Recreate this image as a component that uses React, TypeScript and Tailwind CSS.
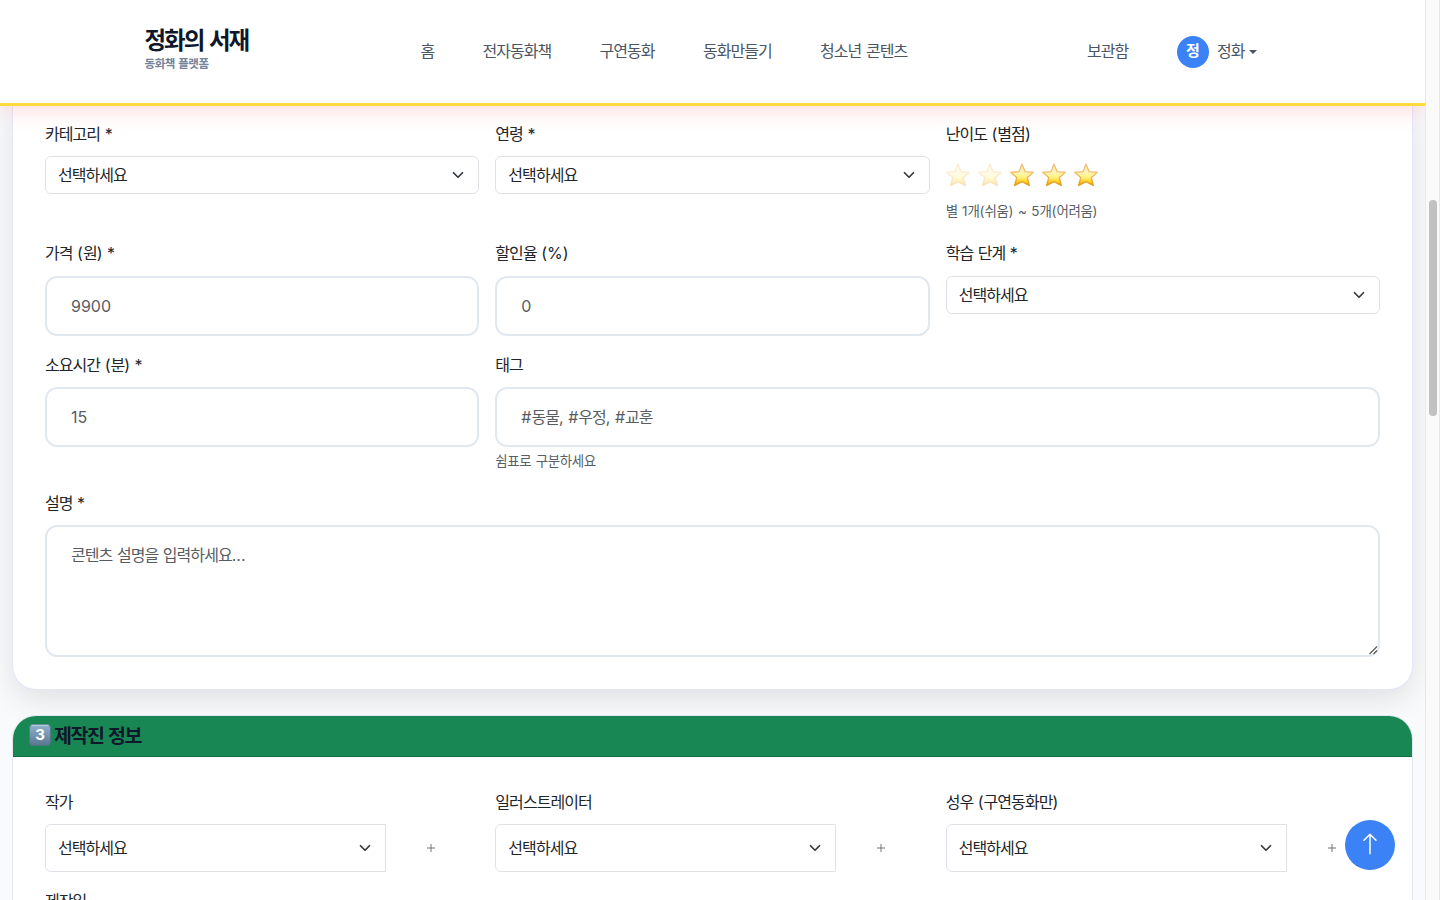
import React from "react";

const chevron = (
  <svg width="16" height="12" viewBox="0 0 16 16" className="shrink-0">
    <path fill="none" stroke="#343a40" strokeLinecap="round" strokeLinejoin="round" strokeWidth="2.3" d="m2 5 6 6 6-6" />
  </svg>
);

function Label({ children }: { children: React.ReactNode }) {
  return <div className="mb-2 h-[26px] whitespace-nowrap text-[16px] leading-[25px] text-[#212529]">{children}</div>;
}

// Hangul run set tighter than the surrounding Latin text
function K({ children }: { children: React.ReactNode }) {
  return <span className="tracking-[-0.94px] [word-spacing:1px]">{children}</span>;
}

// Hangul run inside the small help texts
function S({ children }: { children: React.ReactNode }) {
  return <span className="tracking-[-0.4px] [word-spacing:1px]">{children}</span>;
}

function Select({ joined }: { joined?: boolean }) {
  return (
    <div
      className={
        joined
          ? "flex h-12 w-[341px] items-center justify-between rounded-l-[6px] border border-[#dee2e6] bg-white pr-3 pl-3 text-[16px] leading-6 text-[#212529]"
          : "flex h-[38px] items-center justify-between rounded-[6px] border border-[#dee2e6] bg-white pr-3 pl-3 text-[16px] leading-6 text-[#212529]"
      }
    >
      <K>선택하세요</K>
      {chevron}
    </div>
  );
}

function Input({ children }: { children: React.ReactNode }) {
  return (
    <div className="flex h-[60px] items-center rounded-xl border-2 border-[#e2e8f0] bg-white px-6 text-[16px] leading-6 text-[#595c5f]">
      {children}
    </div>
  );
}

function Star({ faded }: { faded?: boolean }) {
  return (
    <svg width="24" height="24" viewBox="0 0 24 24" className={faded ? "opacity-30" : ""}>
      <defs>
        <linearGradient id="starFill" x1="0" y1="0" x2="0" y2="1">
          <stop offset="0" stopColor="#ffe59a" />
          <stop offset="0.4" stopColor="#fff6b8" />
          <stop offset="0.62" stopColor="#fff280" />
          <stop offset="0.8" stopColor="#ffd52c" />
          <stop offset="1" stopColor="#f0a000" />
        </linearGradient>
        <linearGradient id="starEdge" x1="0" y1="0" x2="0" y2="1">
          <stop offset="0" stopColor="#f2bf85" />
          <stop offset="0.5" stopColor="#f5ba5c" />
          <stop offset="1" stopColor="#e8940c" />
        </linearGradient>
      </defs>
      <path
        d="M12 1.1 15.1 8.7 23.4 9.3 17.3 14.6 19.3 22.4 12 18.6 4.7 22.4 6.7 14.6 .6 9.3 8.9 8.7Z"
        fill="url(#starFill)"
        stroke="url(#starEdge)"
        strokeWidth="1.3"
        strokeLinejoin="round"
      />
    </svg>
  );
}

function Person({ label }: { label: React.ReactNode }) {
  return (
    <div>
      <Label>{label}</Label>
      <div className="flex">
        <Select joined />
        <div className="flex h-12 flex-1 items-center justify-center">
          <svg width="8" height="8" viewBox="0 0 8 8" className="mr-[3px]">
            <path d="M4 0v8M0 4h8" stroke="#6c757d" strokeWidth="1" />
          </svg>
        </div>
      </div>
    </div>
  );
}

export default function App() {
  return (
    <div className="flex h-[900px] w-[1440px] overflow-hidden bg-[#f8fafc] font-[Inter,'Noto_Sans_CJK_KR',sans-serif]">
      <div className="flex w-[1425px] shrink-0 flex-col">
        <header className="relative z-10 flex h-[106px] shrink-0 items-center border-b-[3px] border-[#ffd93d] bg-white text-[16px] font-normal whitespace-nowrap text-[#4b5563] shadow-[0_4px_20px_rgba(255,107,107,0.25)]">
          <div className="ml-[144.5px] w-[276px] pb-[5px]">
            <div className="h-[29px] text-[23.5px] leading-[28px] font-bold tracking-[-2px] text-[#0f172a] [word-spacing:2px]">정화의 서재</div>
            <div className="h-[16px] text-[11.5px] leading-4 font-bold tracking-[-0.45px] text-[#74829a] [word-spacing:1px]">동화책 플랫폼</div>
          </div>
          <nav className="flex w-[666.5px] pb-[2px] leading-6">
            <span className="w-[62px]"><K>홈</K></span>
            <span className="w-[117px]"><K>전자동화책</K></span>
            <span className="w-[103.5px]"><K>구연동화</K></span>
            <span className="w-[117px]"><K>동화만들기</K></span>
            <span><K>청소년 콘텐츠</K></span>
          </nav>
          <span className="w-[90px] pb-[2px]"><K>보관함</K></span>
          <div className="flex h-8 w-8 items-center justify-center rounded-full bg-[#3b82f6] text-[15px] font-bold text-white">정</div>
          <span className="ml-2 pb-[2px]"><K>정화</K></span>
          <svg width="8" height="4" viewBox="0 0 8 4" className="ml-[4px]">
            <path d="M0 0h8L4 4Z" fill="#4b5563" />
          </svg>
        </header>

        <section className="mx-3 h-[584px] shrink-0 rounded-b-3xl border border-t-0 border-[#e5e5fb] bg-white px-8 pt-4 shadow-[0_10px_30px_rgba(0,0,0,0.1)]">
          <div className="grid grid-cols-3 gap-x-4">
            <div className="h-[119px]"><Label><K>카테고리</K> *</Label><Select /></div>
            <div><Label><K>연령</K> *</Label><Select /></div>
            <div>
              <Label><K>난이도</K> (<K>별점</K>)</Label>
              <div className="flex gap-2 pt-[7px]">
                <Star faded /><Star faded /><Star /><Star /><Star />
              </div>
              <div className="mt-[14px] text-[13.5px] leading-5 text-[#595f66] [word-spacing:0.6px]"><S>별</S> 1<S>개</S>(<S>쉬움</S>) ~ 5<S>개</S>(<S>어려움</S>)</div>
            </div>
            <div className="h-[112px]"><Label><K>가격</K> (<K>원</K>) *</Label><div className="pt-px"><Input>9900</Input></div></div>
            <div><Label><K>할인율</K> (%)</Label><div className="pt-px"><Input>0</Input></div></div>
            <div><Label><K>학습 단계</K> *</Label><div className="pt-px"><Select /></div></div>
            <div className="h-[138px]"><Label><K>소요시간</K> (<K>분</K>) *</Label><Input>15</Input></div>
            <div className="col-span-2">
              <Label><K>태그</K></Label>
              <Input><span>#<K>동물</K>, #<K>우정</K>, #<K>교훈</K></span></Input>
              <div className="mt-[4px] text-[13.5px] leading-5 text-[#595f66]"><S>쉼표로 구분하세요</S></div>
            </div>
            <div className="col-span-3">
              <Label><K>설명</K> *</Label>
              <div className="flex h-[132px] items-end justify-between rounded-xl border-2 border-[#e2e8f0] bg-white pl-6 text-[16px] leading-6 text-[#595c5f]">
                <span className="self-start pt-4"><K>콘텐츠 설명을 입력하세요</K>...</span>
                <svg width="10" height="10" viewBox="0 0 10 10">
                  <path d="M1.5 9 9 1.5M5.5 9 9 5.5" stroke="#555" strokeWidth="1.1" />
                </svg>
              </div>
            </div>
          </div>
        </section>

        <section className="mx-3 mt-[25px] h-[400px] shrink-0 overflow-hidden rounded-3xl border border-[#e2e8f0] bg-white">
          <div className="flex h-[41px] items-center border-b border-[#166f43] bg-[#198754] pl-4">
            <svg width="22" height="22" viewBox="0 0 22 22" className="mr-[3px] mb-[2px]">
              <defs>
                <linearGradient id="key" x1="0" y1="0" x2="0" y2="1">
                  <stop offset="0" stopColor="#92b3d0" />
                  <stop offset="1" stopColor="#59768f" />
                </linearGradient>
              </defs>
              <rect x="0.5" y="0.5" width="21" height="21" rx="3.5" fill="url(#key)" stroke="#55748a" strokeWidth="0.8" />
              <path d="M2.5 1.3h17" stroke="#c2d6e6" strokeWidth="1" />
              <text x="11" y="16.2" fontSize="15" fontWeight="700" textAnchor="middle" fill="#fff">3</text>
            </svg>
            <span className="pb-px text-[19.5px] leading-6 font-bold tracking-[-1.5px] text-[#0f172a] [word-spacing:1.5px]">제작진 정보</span>
          </div>
          <div className="grid grid-cols-3 gap-x-4 px-8 pt-[33px]">
            <Person label={<K>작가</K>} />
            <Person label={<K>일러스트레이터</K>} />
            <Person label={<><K>성우</K> (<K>구연동화만</K>)</>} />
            <div className="pt-[17px]"><Label><K>제작일</K></Label></div>
          </div>
        </section>
      </div>
      <div className="relative z-20 flex w-[15px] shrink-0 justify-center border-x border-[#e8e8e8] bg-[#fafafa]">
        <div className="mt-[200px] h-[216px] w-2 rounded-full bg-[#c1c1c1]" />
      </div>
      <div className="absolute top-[820px] left-[1345px] z-20 flex h-[50px] w-[50px] items-center justify-center rounded-full bg-[#3b82f6]">
        <svg width="24" height="24" viewBox="0 0 16 16" fill="white" className="mb-[2px]">
          <path fillRule="evenodd" d="M8 15a.5.5 0 0 0 .5-.5V2.707l3.146 3.147a.5.5 0 0 0 .708-.708l-4-4a.5.5 0 0 0-.708 0l-4 4a.5.5 0 1 0 .708.708L7.5 2.707V14.5a.5.5 0 0 0 .5.5" />
        </svg>
      </div>
    </div>
  );
}
